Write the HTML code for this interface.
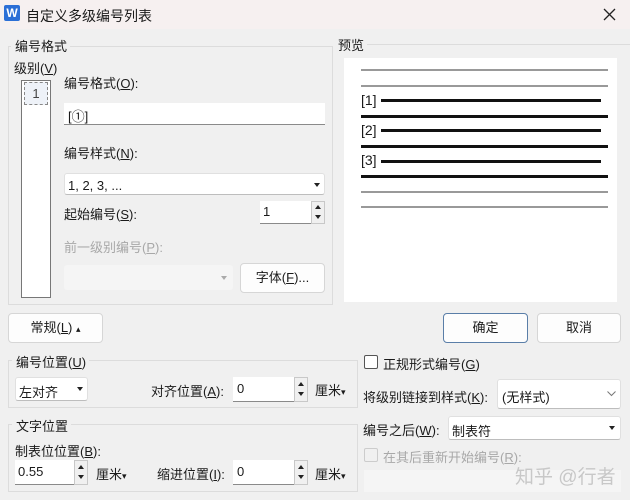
<!DOCTYPE html>
<html><head><meta charset="utf-8"><style>
*{box-sizing:border-box;margin:0;padding:0}
body{width:630px;height:500px;background:#f0f0f0;font-family:"Liberation Sans","Noto Sans CJK SC",sans-serif;font-size:13px;color:#1a1a1a;position:relative;overflow:hidden}
.a{position:absolute;white-space:nowrap}
.g{position:absolute;border:1px solid #dcdcdc}
.lbl{position:absolute;background:#f0f0f0;padding:0 3px 0 4px;font-size:13px}
.in{position:absolute;background:#fff;border-bottom:1px solid #8a8a8a}
.sel{position:absolute;background:#fff;border:1px solid #e0e0e0;border-bottom:1px solid #bdbdbd;border-radius:3px}
.btn{position:absolute;background:#fdfdfd;border:1px solid #d6d6d6;border-radius:4px;text-align:center}
.tri{position:absolute;width:0;height:0;border-left:3px solid transparent;border-right:3px solid transparent;border-top:4px solid #222}
.sp{position:absolute;width:14px;background:#f0f0f0;border:1px solid #c8c8c8}
.sp i{position:absolute;left:3px;width:0;height:0;border-left:3px solid transparent;border-right:3px solid transparent}
.u{text-decoration:underline}
.pl{position:absolute;height:3px}
.gr{background:#999;height:2px}
.bk{background:#111}
.gy{color:#a8a8a8}
</style></head><body>
<div class="a" style="left:0;top:0;width:630px;height:29px;background:#f6f0f0"></div>
<div class="a" style="left:4px;top:5px;width:16px;height:16px;background:#2b6fd6;border-radius:2px;color:#fff;font-weight:bold;font-size:12px;text-align:center;line-height:16px">W</div>
<div class="a" style="left:26px;top:6px;font-size:14px">自定义多级编号列表</div>
<svg class="a" style="left:603px;top:8px" width="13" height="13" viewBox="0 0 13 13"><path d="M1 1L12 12M12 1L1 12" stroke="#222" stroke-width="1.3"/></svg>

<div class="g" style="left:8px;top:46px;width:325px;height:259px"></div>
<div class="lbl" style="left:11px;top:36px">编号格式</div>
<div class="a" style="left:14px;top:58px">级别(<span class="u">V</span>)</div>
<div class="a" style="left:21px;top:80px;width:30px;height:218px;background:#fff;border:1px solid #777"></div>
<div class="a" style="left:24px;top:82px;width:24px;height:23px;border:1px dashed #888;background:#eef2f8;text-align:center;line-height:22px;color:#444">1</div>
<div class="a" style="left:64px;top:73px">编号格式(<span class="u">O</span>):</div>
<div class="in" style="left:64px;top:103px;width:261px;height:22px;padding:3px 4px">[①]</div>
<div class="a" style="left:64px;top:143px">编号样式(<span class="u">N</span>):</div>
<div class="sel" style="left:64px;top:173px;width:261px;height:22px;padding:4px 3px">1, 2, 3, ...</div>
<div class="tri" style="left:314px;top:183px"></div>
<div class="a" style="left:64px;top:204px">起始编号(<span class="u">S</span>):</div>
<div class="in" style="left:260px;top:201px;width:52px;height:23px;padding:3px 3px">1</div>
<div class="sp" style="left:311px;top:201px;height:23px"><i style="top:3px;border-bottom:4px solid #222"></i><i style="top:13px;border-top:4px solid #222"></i></div>
<div class="a gy" style="left:64px;top:237px">前一级别编号(<span class="u">P</span>):</div>
<div class="a" style="left:64px;top:265px;width:169px;height:25px;background:#f5f5f5;border-radius:3px"></div>
<div class="tri" style="left:221px;top:276px;border-top-color:#aaa"></div>
<div class="btn" style="left:240px;top:263px;width:85px;height:30px;line-height:28px">字体(<span class="u">F</span>)...</div>

<div class="g" style="left:336px;top:44px;width:296px;height:0;border-width:1px 0 0 0"></div>
<div class="lbl" style="left:335px;top:35px;padding-left:3px">预览</div>
<div class="a" style="left:344px;top:58px;width:273px;height:244px;background:#fff"></div>
<div class="pl gr" style="left:361px;top:69px;width:247px"></div>
<div class="pl gr" style="left:361px;top:85px;width:247px"></div>
<div class="a" style="left:361px;top:92px;font-size:14px">[1]</div>
<div class="pl bk" style="left:381px;top:99px;width:220px"></div>
<div class="pl bk" style="left:361px;top:115px;width:247px"></div>
<div class="a" style="left:361px;top:122px;font-size:14px">[2]</div>
<div class="pl bk" style="left:381px;top:129px;width:220px"></div>
<div class="pl bk" style="left:361px;top:145px;width:247px"></div>
<div class="a" style="left:361px;top:152px;font-size:14px">[3]</div>
<div class="pl bk" style="left:381px;top:160px;width:220px"></div>
<div class="pl bk" style="left:361px;top:175px;width:247px"></div>
<div class="pl gr" style="left:361px;top:191px;width:247px"></div>
<div class="pl gr" style="left:361px;top:206px;width:247px"></div>

<div class="btn" style="left:8px;top:313px;width:95px;height:30px;line-height:28px">常规(<span class="u">L</span>) <span style="font-size:9px">▴</span></div>
<div class="btn" style="left:443px;top:313px;width:85px;height:30px;line-height:28px;border-color:#5a7ea8">确定</div>
<div class="btn" style="left:537px;top:313px;width:84px;height:30px;line-height:28px">取消</div>

<div class="g" style="left:8px;top:360px;width:350px;height:48px"></div>
<div class="lbl" style="left:12px;top:352px">编号位置(<span class="u">U</span>)</div>
<div class="sel" style="left:15px;top:377px;width:73px;height:24px;padding:4px 3px">左对齐</div>
<div class="tri" style="left:77px;top:387px"></div>
<div class="a" style="left:151px;top:381px">对齐位置(<span class="u">A</span>):</div>
<div class="in" style="left:233px;top:377px;width:63px;height:25px;padding:4px 4px">0</div>
<div class="sp" style="left:294px;top:377px;height:25px"><i style="top:4px;border-bottom:4px solid #222"></i><i style="top:14px;border-top:4px solid #222"></i></div>
<div class="a" style="left:315px;top:380px">厘米<span style="font-size:9px">▾</span></div>

<div class="g" style="left:8px;top:424px;width:350px;height:68px"></div>
<div class="lbl" style="left:12px;top:416px">文字位置</div>
<div class="a" style="left:15px;top:441px">制表位位置(<span class="u">B</span>):</div>
<div class="in" style="left:15px;top:460px;width:60px;height:25px;padding:4px 3px">0.55</div>
<div class="sp" style="left:74px;top:460px;height:25px"><i style="top:4px;border-bottom:4px solid #222"></i><i style="top:14px;border-top:4px solid #222"></i></div>
<div class="a" style="left:96px;top:464px">厘米<span style="font-size:9px">▾</span></div>
<div class="a" style="left:157px;top:464px">缩进位置(<span class="u">I</span>):</div>
<div class="in" style="left:233px;top:460px;width:63px;height:25px;padding:4px 4px">0</div>
<div class="sp" style="left:294px;top:460px;height:25px"><i style="top:4px;border-bottom:4px solid #222"></i><i style="top:14px;border-top:4px solid #222"></i></div>
<div class="a" style="left:315px;top:464px">厘米<span style="font-size:9px">▾</span></div>

<div class="a" style="left:364px;top:355px;width:14px;height:14px;border:1px solid #555;background:#fff;border-radius:2px"></div>
<div class="a" style="left:383px;top:354px">正规形式编号(<span class="u">G</span>)</div>
<div class="a" style="left:363px;top:387px">将级别链接到样式(<span class="u">K</span>):</div>
<div class="sel" style="left:497px;top:379px;width:124px;height:30px;padding:7px 4px">(无样式)</div>
<svg class="a" style="left:607px;top:391px" width="9" height="6" viewBox="0 0 9 6"><path d="M0.5 0.5L4.5 4.5L8.5 0.5" stroke="#777" fill="none"/></svg>
<div class="a" style="left:363px;top:420px">编号之后(<span class="u">W</span>):</div>
<div class="sel" style="left:448px;top:416px;width:173px;height:24px;padding:4px 3px">制表符</div>
<div class="tri" style="left:609px;top:426px"></div>
<div class="a" style="left:364px;top:448px;width:14px;height:14px;border:1px solid #ccc;border-radius:2px"></div>
<div class="a gy" style="left:383px;top:447px">在其后重新开始编号(<span class="u">R</span>):</div>
<div class="a" style="left:364px;top:470px;width:257px;height:22px;background:#f5f5f5"></div>
<div class="a" style="left:515px;top:462px;font-size:19px;color:#c8c8c8">知乎 @行者</div>
</body></html>
